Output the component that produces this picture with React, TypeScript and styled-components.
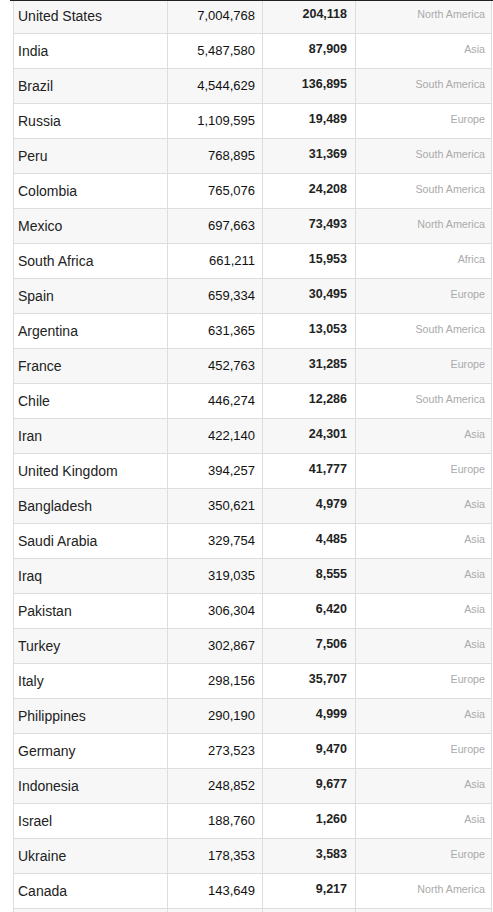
import React, { FunctionComponent } from 'react';
import styled, { createGlobalStyle } from 'styled-components';

const GlobalStyle = createGlobalStyle`
  html, body {
    margin: 0;
    padding: 0;
    background: #fff;
    overflow: hidden;
  }
  body {
    font-family: "Liberation Sans", Arial, sans-serif;
  }
`;

interface Country {
  name: string,
  cases: string,
  deaths: string,
  continent: string,
};

const rows: Country[] = [
  { name: 'United States', cases: '7,004,768', deaths: '204,118', continent: 'North America' },
  { name: 'India', cases: '5,487,580', deaths: '87,909', continent: 'Asia' },
  { name: 'Brazil', cases: '4,544,629', deaths: '136,895', continent: 'South America' },
  { name: 'Russia', cases: '1,109,595', deaths: '19,489', continent: 'Europe' },
  { name: 'Peru', cases: '768,895', deaths: '31,369', continent: 'South America' },
  { name: 'Colombia', cases: '765,076', deaths: '24,208', continent: 'South America' },
  { name: 'Mexico', cases: '697,663', deaths: '73,493', continent: 'North America' },
  { name: 'South Africa', cases: '661,211', deaths: '15,953', continent: 'Africa' },
  { name: 'Spain', cases: '659,334', deaths: '30,495', continent: 'Europe' },
  { name: 'Argentina', cases: '631,365', deaths: '13,053', continent: 'South America' },
  { name: 'France', cases: '452,763', deaths: '31,285', continent: 'Europe' },
  { name: 'Chile', cases: '446,274', deaths: '12,286', continent: 'South America' },
  { name: 'Iran', cases: '422,140', deaths: '24,301', continent: 'Asia' },
  { name: 'United Kingdom', cases: '394,257', deaths: '41,777', continent: 'Europe' },
  { name: 'Bangladesh', cases: '350,621', deaths: '4,979', continent: 'Asia' },
  { name: 'Saudi Arabia', cases: '329,754', deaths: '4,485', continent: 'Asia' },
  { name: 'Iraq', cases: '319,035', deaths: '8,555', continent: 'Asia' },
  { name: 'Pakistan', cases: '306,304', deaths: '6,420', continent: 'Asia' },
  { name: 'Turkey', cases: '302,867', deaths: '7,506', continent: 'Asia' },
  { name: 'Italy', cases: '298,156', deaths: '35,707', continent: 'Europe' },
  { name: 'Philippines', cases: '290,190', deaths: '4,999', continent: 'Asia' },
  { name: 'Germany', cases: '273,523', deaths: '9,470', continent: 'Europe' },
  { name: 'Indonesia', cases: '248,852', deaths: '9,677', continent: 'Asia' },
  { name: 'Israel', cases: '188,760', deaths: '1,260', continent: 'Asia' },
  { name: 'Ukraine', cases: '178,353', deaths: '3,583', continent: 'Europe' },
  { name: 'Canada', cases: '143,649', deaths: '9,217', continent: 'North America' },
  // next row only peeks in at the bottom edge
  { name: '', cases: '', deaths: '', continent: '' },
];

const Page_ = styled.div`
  position: relative;
  height: 912px;
  overflow: hidden;
`;

const HeaderEdge_ = styled.div`
  background: #222;
  height: 1px;
  left: 10px;
  position: absolute;
  right: 0;
  top: 0;
`;

const Table_ = styled.div`
  margin: -1px 0 0 13px;
  width: 479px;
`;

const Row_ = styled.div<{ $shaded: boolean }>`
  background: ${props => (props.$shaded ? '#f7f7f7' : '#fff')};
  border-bottom: 1px solid #ddd;
  box-sizing: border-box;
  display: grid;
  grid-template-columns: 154px 95px 93px 137px;
  height: 35px;
`;

const Cell_ = styled.div`
  align-items: center;
  border-left: 1px solid #ddd;
  box-sizing: border-box;
  display: flex;
  white-space: nowrap;
`;

const Name_ = styled(Cell_)`
  color: #222;
  font-size: 14px;
  padding: 0 0 1px 4px;
`;

const Cases_ = styled(Cell_)`
  color: #111;
  font-size: 13px;
  justify-content: flex-end;
  padding: 0 7px 1px 0;
`;

const Deaths_ = styled(Cell_)`
  color: #222;
  font-size: 12.5px;
  font-weight: bold;
  justify-content: flex-end;
  padding: 0 8px 4px 0;
`;

const Continent_ = styled(Cell_)`
  border-right: 1px solid #ddd;
  color: #aaa;
  font-size: 10.7px;
  justify-content: flex-end;
  padding: 0 6px 5px 0;
`;

const App: FunctionComponent = () => (
  <Page_>
    <GlobalStyle />
    <Table_>
      {rows.map((row: Country, index: number) => (
        <Row_ $shaded={index % 2 === 0} key={`row-${index}`}>
          <Name_>{row.name}</Name_>
          <Cases_>{row.cases}</Cases_>
          <Deaths_>{row.deaths}</Deaths_>
          <Continent_>{row.continent}</Continent_>
        </Row_>
      ))}
    </Table_>
    <HeaderEdge_ />
  </Page_>
);

export default App;
